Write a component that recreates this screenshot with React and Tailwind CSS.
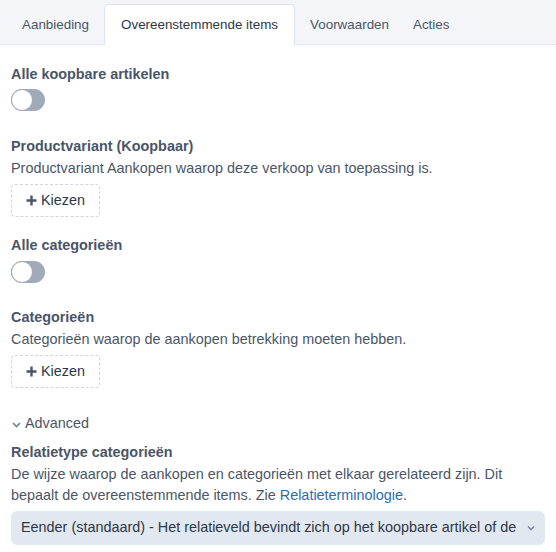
import React, { useState } from 'react';

const tabs = ['Aanbieding', 'Overeenstemmende items', 'Voorwaarden', 'Acties'];

function Toggle({ on, onChange }) {
  return (
    <button
      type="button"
      onClick={() => onChange(!on)}
      className={`relative h-[22px] w-[34px] rounded-full ${on ? 'bg-[#3b82f6]' : 'bg-[#a0aab8]'}`}
    >
      <span
        className={`absolute top-0 h-[22px] w-[22px] rounded-full border border-[#a0aab8] bg-white ${on ? 'left-[12px]' : 'left-0'}`}
      />
    </button>
  );
}

function ChooseButton() {
  return (
    <button
      type="button"
      className="flex h-[33px] w-[89px] items-center justify-center gap-[4px] rounded-[4px] border border-dashed border-[#cfd5dd] text-[14.4px] text-[#2d3748]"
    >
      <svg width="11" height="11" viewBox="0 0 11 11">
        <path d="M5.5 0.5v10M0.5 5.5h10" stroke="#4a5568" strokeWidth="2.4" />
      </svg>
      Kiezen
    </button>
  );
}

export default function App() {
  const [active, setActive] = useState(1);
  const [allItems, setAllItems] = useState(false);
  const [allCats, setAllCats] = useState(false);

  return (
    <div className="min-h-[552px] w-[556px] bg-white text-[14.4px] text-[#4a5568]" style={{ fontFamily: '"Liberation Sans", Arial, sans-serif' }}>
      {/* Tabs */}
      <div className="flex h-[45px] items-end border-b border-[#e2e8f0] bg-[#f3f5f9] pl-[10px] text-[13.4px]">
        {tabs.map((t, i) => (
          <button
            key={t}
            type="button"
            onClick={() => setActive(i)}
            className={
              i === active
                ? 'relative -mb-px mx-[3px] h-[41px] rounded-t-[5px] border border-b-0 border-[#dde3ea] bg-white px-[16px] pt-[1px] text-[#2d3748]'
                : 'h-[40px] px-[12px] pt-[2px] text-[#4a5568]'
            }
          >
            {t}
          </button>
        ))}
      </div>

      <div className="px-[11px] pt-[19px]">
        <div className="font-bold leading-[20px] text-[#4a5568]">Alle koopbare artikelen</div>
        <div className="mt-[5px] flex">
          <Toggle on={allItems} onChange={setAllItems} />
        </div>

        <div className="mt-[25px] font-bold leading-[20px]">Productvariant (Koopbaar)</div>
        <div className="mt-[2px] leading-[20px]">Productvariant Aankopen waarop deze verkoop van toepassing is.</div>
        <div className="mt-[6px]">
          <ChooseButton />
        </div>

        <div className="mt-[18px] font-bold leading-[20px]">Alle categorieën</div>
        <div className="mt-[6px] flex">
          <Toggle on={allCats} onChange={setAllCats} />
        </div>

        <div className="mt-[24px] font-bold leading-[20px]">Categorieën</div>
        <div className="mt-[2px] leading-[20px]">Categorieën waarop de aankopen betrekking moeten hebben.</div>
        <div className="mt-[6px]">
          <ChooseButton />
        </div>

        <div className="mt-[25px] flex items-center gap-[3px] leading-[20px] text-[#4a5568]">
          <svg width="11" height="11" viewBox="0 0 11 11" className="mt-[2px]">
            <path d="M2 4l3.5 3.5L9 4" fill="none" stroke="#718096" strokeWidth="1.6" />
          </svg>
          Advanced
        </div>

        <div className="mt-[9px] font-bold leading-[20px]">Relatietype categorieën</div>
        <div className="mt-[2px] max-w-[520px] leading-[21px]">
          De wijze waarop de aankopen en categorieën met elkaar gerelateerd zijn. Dit bepaalt de overeenstemmende items. Zie{' '}
          <a href="#" className="text-[#2b6cb0]">Relatieterminologie</a>.
        </div>
        <div className="mt-[5px] flex h-[34px] items-center justify-between rounded-[6px] bg-[#e2e8f0] pl-[10px] pr-[9px] text-[#2d3748]">
          <span className="overflow-hidden whitespace-nowrap">Eender (standaard) - Het relatieveld bevindt zich op het koopbare artikel of de</span>
          <svg width="10" height="10" viewBox="0 0 10 10" className="ml-[6px] shrink-0">
            <path d="M2 3.5l3 3 3-3" fill="none" stroke="#718096" strokeWidth="1.3" />
          </svg>
        </div>
      </div>
    </div>
  );
}
